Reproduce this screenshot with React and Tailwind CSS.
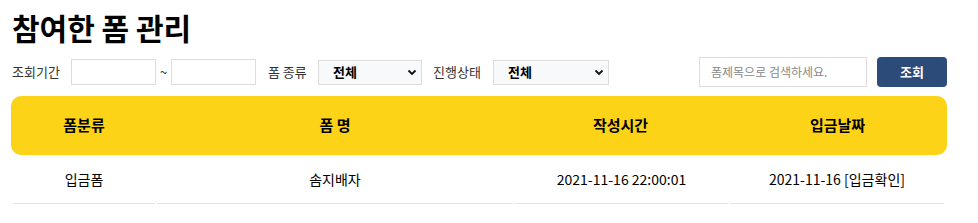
import React from 'react';

const font = { fontFamily: '"Noto Sans CJK KR", "Noto Sans", sans-serif' };

function Select({ w }) {
  return (
    <div className={`${w} h-[25px] border border-[#ddd] bg-[#f8f9fb] flex items-center justify-between pl-[14px] pr-[4px]`}>
      <span className="text-[13px] font-bold text-black">전체</span>
      <svg width="10" height="10" viewBox="0 0 10 10"><path d="M1.5 3.5 L5 7 L8.5 3.5" fill="none" stroke="#111" strokeWidth="1.8" /></svg>
    </div>
  );
}

export default function App() {
  const cols = 'grid grid-cols-[146px_356px_215px_1fr]';
  return (
    <div className="w-[978px] h-[223px] bg-white" style={font}>
      <div className="pl-[11px] pr-[31px]">
        <h1 className="text-[30px] font-bold leading-none pt-[12px] pl-[1px] text-black">참여한 폼 관리</h1>

        <div className="flex items-center mt-[15px] h-[30px] text-[13px] text-[#333]">
          <span className="ml-[1px] w-[59px]">조회기간</span>
          <div className="w-[85px] h-[26px] border border-[#ddd]" />
          <span className="w-[15px] text-center">~</span>
          <div className="w-[85px] h-[26px] border border-[#ddd]" />
          <span className="ml-[12px] w-[50px]">폼 종류</span>
          <Select w="w-[104px]" />
          <span className="ml-[11px] w-[60px]">진행상태</span>
          <Select w="w-[116px]" />
          <div className="ml-auto w-[168px] h-[30px] border border-[#ddd] flex items-center pl-[11px] text-[12px] text-[#888]">폼제목으로 검색하세요.</div>
          <button className="ml-[10px] w-[70px] h-[30px] rounded-[4px] bg-[#2d4b79] text-white text-[13px] font-bold">조회</button>
        </div>

        <div className={`${cols} mt-[9px] h-[59px] rounded-[10px] bg-[#fdd317] items-center text-center text-[15px] font-bold text-black`}>
          <div>폼분류</div>
          <div>폼 명</div>
          <div>작성시간</div>
          <div>입금날짜</div>
        </div>

        <div className="grid grid-cols-[142px_356px_213px_214px] gap-x-[2px] px-[2px] text-[14px] text-black text-center">
          <div className="h-[49px] flex items-center justify-center border-b border-[#e4e4e4]">입금폼</div>
          <div className="h-[49px] flex items-center justify-center border-b border-[#e4e4e4]">솜지배자</div>
          <div className="h-[49px] flex items-center justify-center border-b border-[#e4e4e4]">2021-11-16 22:00:01</div>
          <div className="h-[49px] flex items-center justify-center border-b border-[#e4e4e4]">2021-11-16 [입금확인]</div>
        </div>
      </div>
    </div>
  );
}
